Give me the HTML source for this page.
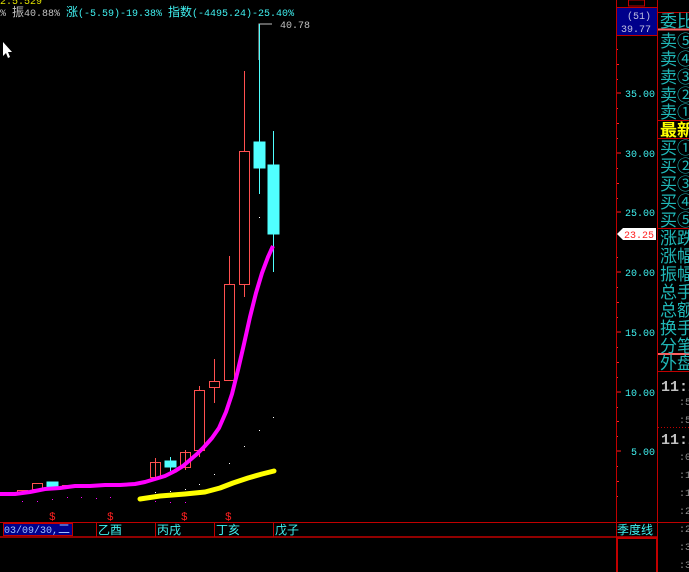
<!DOCTYPE html>
<html><head><meta charset="utf-8"><style>
html,body{margin:0;padding:0;background:#000;width:689px;height:572px;overflow:hidden}
svg{display:block}
text{font-family:"Liberation Mono","Noto Sans CJK SC",monospace}
.cj{font-family:"Noto Sans CJK SC","WenQuanYi Zen Hei",sans-serif}
</style></head><body>
<svg width="689" height="572" xmlns="http://www.w3.org/2000/svg">
<rect width="689" height="572" fill="#000"/>
<!-- top text -->
<text x="0" y="4" font-size="10" fill="#e0e000">2.5.529</text>
<text x="0" y="16" font-size="10" fill="#c0c0c0">% <tspan class="cj" font-size="12">振</tspan>40.88%</text>
<text x="66" y="16" font-size="10" fill="#40f0f0"><tspan class="cj" font-size="12">涨</tspan>(-5.59)-19.38% <tspan class="cj" font-size="12">指数</tspan>(-4495.24)-25.40%</text>
<!-- cursor -->
<path d="M3 42 L3 56 L6 53 L8 58 L10 57 L8 52 L12 52 Z" fill="#fff"/>
<!-- 40.78 marker -->
<polyline points="259,60 259,24 272,24" stroke="#c0c0c0" fill="none"/>
<text x="280" y="28" font-size="10" fill="#c0c0c0">40.78</text>
<!-- candles -->
<g stroke="#ff5050" fill="none" stroke-width="1">
<rect x="17.5" y="490.5" width="10" height="3"/>
<rect x="32.5" y="483.5" width="10" height="6"/>
<rect x="62.5" y="485.5" width="10" height="2"/>
<line x1="155.5" y1="458" x2="155.5" y2="480"/><rect x="150.5" y="462.5" width="10" height="15"/>
<line x1="185.5" y1="450" x2="185.5" y2="470"/><rect x="180.5" y="452.5" width="10" height="15"/>
<line x1="199.5" y1="386" x2="199.5" y2="457"/><rect x="194.5" y="390.5" width="10" height="60" fill="#000"/>
<line x1="214.5" y1="359" x2="214.5" y2="403"/><rect x="209.5" y="381.5" width="10" height="6" fill="#000"/>
<line x1="229.5" y1="256" x2="229.5" y2="381"/><rect x="224.5" y="284.5" width="10" height="96" fill="#000"/>
<line x1="244.5" y1="71" x2="244.5" y2="297"/><rect x="239.5" y="151.5" width="10" height="133" fill="#000"/>
</g>
<g stroke="#50ffff" fill="#50ffff">
<line x1="259.5" y1="24" x2="259.5" y2="194"/><rect x="254" y="142" width="11" height="26"/>
<line x1="273.5" y1="131" x2="273.5" y2="272"/><rect x="268" y="165" width="11" height="69"/>
<line x1="170.5" y1="457" x2="170.5" y2="471"/><rect x="165" y="461" width="11" height="6"/>
<rect x="47" y="482" width="11" height="6"/>
</g>
<!-- dots -->
<g fill="#fff">
<rect x="259" y="217" width="1" height="1"/><rect x="273" y="417" width="1" height="1"/><rect x="259" y="430" width="1" height="1"/><rect x="244" y="446" width="1" height="1"/><rect x="229" y="463" width="1" height="1"/><rect x="214" y="474" width="1" height="1"/><rect x="199" y="484" width="1" height="1"/><rect x="185" y="489" width="1" height="1"/><rect x="170" y="491" width="1" height="1"/><rect x="155" y="492" width="1" height="1"/>
</g>
<g fill="#ff00ff"><rect x="185" y="502" width="1" height="1"/><rect x="170" y="502" width="1" height="1"/><rect x="155" y="501" width="1" height="1"/><rect x="110" y="497" width="1" height="1"/><rect x="96" y="498" width="1" height="1"/><rect x="81" y="497" width="1" height="1"/><rect x="67" y="497" width="1" height="1"/><rect x="52" y="499" width="1" height="1"/><rect x="37" y="501" width="1" height="1"/><rect x="22" y="501" width="1" height="1"/></g>
<!-- MA magenta -->
<polyline points="0,494 15,494 30,492 45,489 60,488 75,486 90,486 105,485 120,485 135,484 145,482 155,479 165,476 175,471 183,466 190,460 197,454 204,447 212,438 219,428 226,412 232,394 238,370 244,344 250,317 256,293 262,273 268,257 273,246" fill="none" stroke="#ff00ff" stroke-width="4" stroke-linejoin="round"/>
<!-- yellow -->
<polyline points="140,499 160,496 185,494 205,492 220,488 233,483 248,478 262,474 274,471" fill="none" stroke="#ffff00" stroke-width="5" stroke-linecap="round" stroke-linejoin="round"/>
<!-- $ markers -->
<g fill="#ff2020" font-size="11"><text x="49" y="520">$</text><text x="107" y="520">$</text><text x="181" y="520">$</text><text x="225" y="520">$</text></g>
<!-- bottom axis -->
<line x1="0" y1="522.5" x2="689" y2="522.5" stroke="#c00000"/>
<line x1="0" y1="537" x2="658" y2="537" stroke="#c00000" stroke-width="1.5"/>
<rect x="3.5" y="523.5" width="69" height="12" fill="#00008b" stroke="#c00000"/>
<text x="4" y="533" font-size="10" fill="#a0c0ff">03/09/30,<tspan class="cj" font-size="12">二</tspan></text>
<g stroke="#c00000"><line x1="96.5" y1="522" x2="96.5" y2="537"/><line x1="155.5" y1="522" x2="155.5" y2="537"/><line x1="214.5" y1="522" x2="214.5" y2="537"/><line x1="273.5" y1="522" x2="273.5" y2="537"/></g>
<g class="cj" font-size="12" fill="#40f0f0"><text x="98" y="534">乙酉</text><text x="157" y="534">丙戌</text><text x="216" y="534">丁亥</text><text x="275" y="534">戊子</text></g>
<!-- right axis -->
<line x1="616.5" y1="0" x2="616.5" y2="572" stroke="#c00000"/>
<rect x="628.5" y="0" width="16" height="6" fill="none" stroke="#c00000"/>
<rect x="616.5" y="7.5" width="41" height="28" fill="#00008b" stroke="#c00000"/>
<text x="627" y="19" font-size="10" fill="#c0c0e0">(51)</text>
<text x="621" y="32" font-size="10" fill="#c0c0e0">39.77</text>
<g stroke="#ff2020"><line x1="617" y1="93" x2="621" y2="93"/><line x1="617" y1="153" x2="621" y2="153"/><line x1="617" y1="212" x2="621" y2="212"/><line x1="617" y1="272" x2="621" y2="272"/><line x1="617" y1="332" x2="621" y2="332"/><line x1="617" y1="392" x2="621" y2="392"/><line x1="617" y1="451" x2="621" y2="451"/></g>
<g fill="#ff2020"><rect x="617" y="49" width="1" height="1"/><rect x="617" y="64" width="2" height="1"/><rect x="617" y="79" width="1" height="1"/><rect x="617" y="108" width="1" height="1"/><rect x="617" y="123" width="2" height="1"/><rect x="617" y="138" width="1" height="1"/><rect x="617" y="168" width="1" height="1"/><rect x="617" y="183" width="2" height="1"/><rect x="617" y="198" width="1" height="1"/><rect x="617" y="257" width="1" height="1"/><rect x="617" y="287" width="1" height="1"/><rect x="617" y="302" width="2" height="1"/><rect x="617" y="317" width="1" height="1"/><rect x="617" y="347" width="1" height="1"/><rect x="617" y="362" width="2" height="1"/><rect x="617" y="377" width="1" height="1"/><rect x="617" y="407" width="1" height="1"/><rect x="617" y="421" width="2" height="1"/><rect x="617" y="436" width="1" height="1"/><rect x="617" y="466" width="1" height="1"/><rect x="617" y="481" width="2" height="1"/><rect x="617" y="496" width="1" height="1"/></g>
<g font-size="10" fill="#40f0f0" text-anchor="end"><text x="655" y="97">35.00</text><text x="655" y="157">30.00</text><text x="655" y="216">25.00</text><text x="655" y="276">20.00</text><text x="655" y="336">15.00</text><text x="655" y="396">10.00</text><text x="655" y="455">5.00</text></g>
<path d="M617 234 L623 228 L656 228 L656 240 L623 240 Z" fill="#fff"/>
<text x="624" y="238" font-size="10" fill="#ff2020">23.25</text>
<rect x="617" y="523" width="40" height="13" fill="none"/>
<text x="617" y="534" class="cj" font-size="12" fill="#40f0f0">季度线</text>
<rect x="617" y="538" width="40" height="36" fill="none" stroke="#c00000" stroke-width="2"/>
<!-- right panel -->
<line x1="657.5" y1="0" x2="657.5" y2="572" stroke="#c00000"/>
<g stroke="#c00000"><line x1="658" y1="120.5" x2="689" y2="120.5"/><line x1="658" y1="138.5" x2="689" y2="138.5"/><line x1="658" y1="228.5" x2="689" y2="228.5"/><line x1="658" y1="371.5" x2="689" y2="371.5"/><line x1="658" y1="12.5" x2="689" y2="12.5"/></g>
<line x1="658" y1="29.5" x2="689" y2="29.5" stroke="#ff6060" stroke-width="2"/>
<line x1="658" y1="354" x2="689" y2="354" stroke="#ff6060" stroke-width="2"/>
<line x1="658" y1="427.5" x2="689" y2="427.5" stroke="#c00000" stroke-dasharray="1,2"/>
<g class="cj" font-size="17" fill="#20b8b8">
<text x="660" y="27">委比</text><text x="660" y="47">卖⑤</text><text x="660" y="65">卖④</text><text x="660" y="83">卖③</text><text x="660" y="101">卖②</text><text x="660" y="118">卖①</text>
<text x="660" y="136" fill="#ffff00" font-weight="bold">最新</text>
<text x="660" y="154">买①</text><text x="660" y="172">买②</text><text x="660" y="190">买③</text><text x="660" y="208">买④</text><text x="660" y="226">买⑤</text>
<text x="660" y="244">涨跌</text><text x="660" y="262">涨幅</text><text x="660" y="280">振幅</text><text x="660" y="298">总手</text><text x="660" y="316">总额</text><text x="660" y="334">换手</text><text x="660" y="352">分笔</text><text x="660" y="369">外盘</text>
</g>
<g font-size="15" fill="#c0c0c0" font-weight="bold"><text x="661" y="391">11:2</text><text x="661" y="444">11:2</text></g>
<g font-size="10" fill="#909090"><text x="679" y="405">:5</text><text x="679" y="423">:5</text><text x="679" y="460">:0</text><text x="679" y="478">:1</text><text x="679" y="496">:1</text><text x="679" y="514">:2</text><text x="679" y="532">:2</text><text x="679" y="550">:3</text><text x="679" y="568">:3</text></g>
</svg>
</body></html>
